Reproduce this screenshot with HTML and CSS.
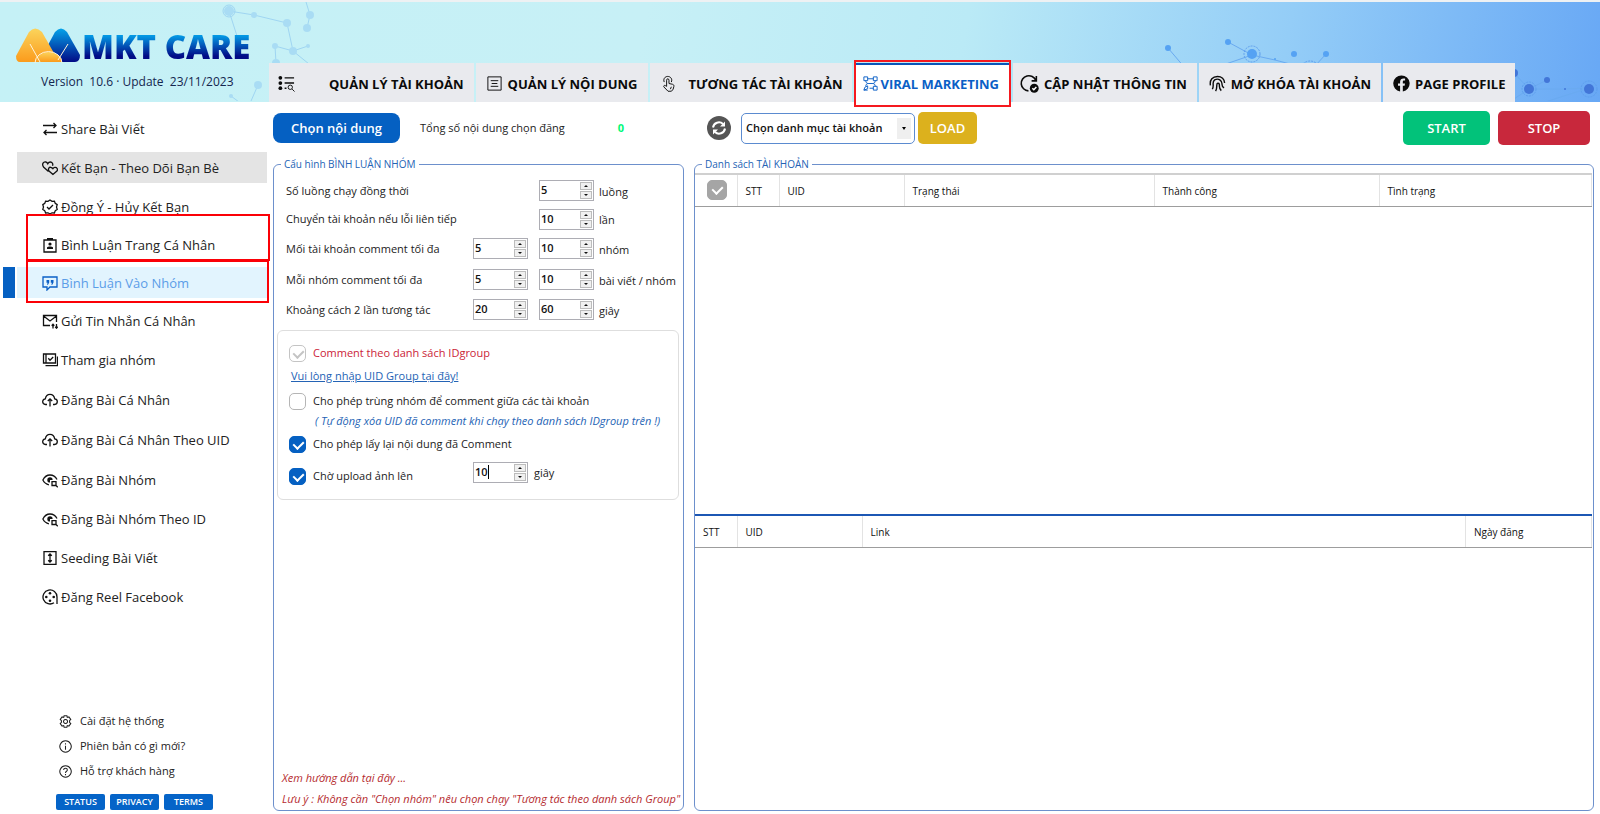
FILE: index.html
```html
<!DOCTYPE html>
<html lang="vi">
<head>
<meta charset="utf-8">
<title>MKT Care</title>
<link rel="stylesheet" href="styles.css">
</head>
<body>
<svg class="sprite" aria-hidden="true">
  <symbol id="i-share" viewBox="0 0 16 16"><path d="M1 4.500h13M11.500 2l2.500 2.500L11.500 7M15 11.500H2M4.500 9L2 11.500L4.500 14"/></symbol>
  <symbol id="i-hearts" viewBox="0 0 16 16"><path d="M6.500 11.500L1.500 7C-.5 4 1.500 1.500 3.800 2c1 .2 1.700 1 2 1.700C6.500 2.500 7.500 2 8.300 2c2 0 3 2 2.200 3.800M11 14.500L7 11C5.700 9 7 7 8.700 7.300c1 .2 1.700.7 2.200 1.400.5-.8 1.200-1.200 2-1.300 2-.2 3.300 2 2 3.700z"/></symbol>
  <symbol id="i-badge" viewBox="0 0 16 16"><path d="M8 1l2 1.300 2.400-.2.800 2.200 2 1.300L14.500 8l.7 2.400-2 1.400-.8 2.200-2.400-.2L8 15l-2-1.200-2.400.2-.8-2.200-2-1.400L1.500 8 .8 5.600l2-1.300.8-2.200 2.400.2zM5 8l2 2 4-4"/></symbol>
  <symbol id="i-id" viewBox="0 0 16 16"><path d="M2 3h12v12H2zM5.500 2.500h5"/><path class="solid" d="M5 1h6v2H5zM5 12v-1.500c1-1.200 5-1.200 6 0V12z"/><circle class="solid" cx="8" cy="7" r="1.600"/></symbol>
  <symbol id="i-quote" viewBox="0 0 16 16"><path d="M1 2h14v10H8l-3 3v-3H1z"/><path class="solid" d="M4.500 5h2.700v2.500L6 9.700H5l.6-2H4.500zM8.800 5h2.700v2.500l-1.200 2.200h-1l.6-2H8.800z"/></symbol>
  <symbol id="i-mail" viewBox="0 0 16 16"><path d="M8 12.500H1.500v-10h13V9M1.500 3L8 8l6.500-5M11 15.500v-4M9.700 12.700L11 11.300l1.300 1.400M14.500 11v4.200M13.200 13.800l1.300 1.400 1.300-1.400"/></symbol>
  <symbol id="i-join" viewBox="0 0 16 16"><path d="M4 2h9.500v9H4zM4 2H1.500v9H4M3.500 13.700H15.500V4.500M6.300 6.300l1.700 1.900 3.200-3.200"/></symbol>
  <symbol id="i-cloud" viewBox="0 0 16 16"><path d="M5 12.500H3.500C1.800 12.300.6 11 .7 9.500.8 8 1.800 7 3.300 6.800 3.800 4 5.800 2.300 8 2.300s4.200 1.700 4.700 4.500c1.600.2 2.600 1.200 2.600 2.700 0 1.700-1.200 2.900-2.800 3H11M8 14.500V7M5.800 9L8 6.800 10.200 9"/></symbol>
  <symbol id="i-eye" viewBox="0 0 16 16"><path d="M15 7.500C13.500 4.600 11 3 8 3S2.500 4.800.9 8c1.300 2.600 3.300 4.200 6 4.800M10 9.700h4v3.800h-4zM14 13.500l1.800 1.800"/><path class="solid" d="M8 5.200A2.700 2.700 0 1 0 8 10.600V8h2.600A2.700 2.700 0 0 0 8 5.200z"/></symbol>
  <symbol id="i-seed" viewBox="0 0 16 16"><path d="M2 1.700h12v12.600H2zM8 4v8M6.200 5.700L8 4l1.800 1.700M6.200 10.300L8 12l1.800-1.700"/></symbol>
  <symbol id="i-reel" viewBox="0 0 16 16"><path d="M15 15V8a7 7 0 1 0-3 5.700"/><circle class="solid" cx="8" cy="4.300" r="1.300"/><circle class="solid" cx="8" cy="11.700" r="1.300"/><circle class="solid" cx="4.300" cy="8" r="1.300"/><circle class="solid" cx="11.700" cy="8" r="1.300"/></symbol>
  <symbol id="i-gear" viewBox="0 0 16 16"><path d="M6.300 1h3.400l.5 2 2-.6 2.300 3L13 7v2l1.500 1.600-2.300 3-2-.6-.5 2H6.300l-.5-2-2 .6-2.300-3L3 9V7L1.500 5.400l2.300-3 2 .6zM8 5.500a2.500 2.500 0 1 0 .1 0z"/></symbol>
  <symbol id="i-info" viewBox="0 0 16 16"><path d="M8 1a7 7 0 1 0 .1 0zM8 7v5M8 4v1.500"/></symbol>
  <symbol id="i-help" viewBox="0 0 16 16"><path d="M8 1a7 7 0 1 0 .1 0zM5.700 6.300c0-3 4.600-2.800 4.600-.2C10.300 7.700 8 7.800 8 9.700M8 11v1.500"/></symbol>
</svg>

<header class="top">
  <svg class="net net-left" viewBox="0 0 110 99" aria-hidden="true">
    <path d="M9 9L34 13 67 21 73 49 55 44M73 49L88 44M9 9L17 34M86 0l4 13-3 13M73 49l16 13M55 44l1 17M38 83l-7 16M11 94l8 6"/>
    <g><circle cx="9" cy="9" r="5"/><circle cx="34" cy="13" r="3"/><circle cx="67" cy="21" r="4"/><circle cx="90" cy="13" r="4"/><circle cx="87" cy="26" r="4"/><circle cx="73" cy="49" r="4"/><circle cx="55" cy="44" r="3"/><circle cx="88" cy="44" r="2"/><circle cx="56" cy="61" r="4"/><circle cx="38" cy="83" r="4"/><circle cx="11" cy="94" r="2"/></g>
    <circle class="ring" cx="9" cy="9" r="6"/>
  </svg>
  <svg class="net net-right" viewBox="0 0 460 99" aria-hidden="true">
    <path d="M28 46l17 20M88 40l24 13 23 5 30 8M112 53L80 64M186 52l-11 12M374 71l15 16M389 87l18-9M389 87h36l24-1 11-8M389 87l-18 12M449 86l-44 14M449 86l11 8"/>
    <g><circle cx="28" cy="46" r="3"/><circle cx="88" cy="40" r="3"/><circle cx="112" cy="52" r="5"/><circle cx="154" cy="52" r="3"/><circle cx="186" cy="52" r="3"/><circle cx="135" cy="57" r="1"/></g>
    <g class="deep"><circle cx="374" cy="71" r="4"/><circle cx="389" cy="87" r="5"/><circle cx="407" cy="78" r="3"/><circle cx="425" cy="87" r="1"/><circle cx="449" cy="87" r="5"/></g>
    <g class="ring"><circle cx="112" cy="52" r="8"/><circle cx="170" cy="69" r="10"/><circle cx="389" cy="87" r="7"/><circle cx="449" cy="87" r="8"/></g>
  </svg>

  <div class="brand">
    <div class="brand-row">
      <svg class="brand-mark" viewBox="0 0 64 35" aria-hidden="true">
        <defs>
          <linearGradient id="gold" x2="0" y2="1"><stop stop-color="#fbd45c"/><stop offset="1" stop-color="#fb9b1c"/></linearGradient>
          <linearGradient id="navy" x2="0" y2="1"><stop stop-color="#04a4ea"/><stop offset="1" stop-color="#020b86"/></linearGradient>
        </defs>
        <path fill="url(#navy)" d="M32 17L39 4Q45-3 51 4L64 27Q64 34 59 34H44z"/>
        <path fill="url(#gold)" d="M0 28L13 4Q19-3 26 4L43 34H4Q0 34 0 28z"/>
        <path fill="url(#gold)" d="M20 34a13 10 0 0 1 26 0z"/>
        <path class="cut" d="M14 16L24 34M52 16L42 32M19 35a13 11 0 0 1 27 0"/>
      </svg>
      <span class="brand-name">MKT CARE</span>
    </div>
    <p class="version">Version&nbsp; 10.6 · Update&nbsp; 23/11/2023</p>
  </div>

  <nav class="tabs">
    <a class="tab tab-wide" href="#"><svg viewBox="0 0 18 18"><path class="mid" d="M7 3h10M7 8.500h10M7 14h2"/><circle class="solid" cx="2.500" cy="3" r="2"/><circle class="solid" cx="2.500" cy="8.500" r="2"/><circle class="solid" cx="2.500" cy="14" r="2"/><circle cx="13" cy="13" r="2.300"/><path d="M15 15l2.500 2.500"/></svg><span>QUẢN LÝ TÀI KHOẢN</span></a>
    <a class="tab" href="#"><svg viewBox="0 0 18 18"><path d="M2 2h14v14H2zM5 6h8M6 9h6M5 12h8"/></svg><span>QUẢN LÝ NỘI DUNG</span></a>
    <a class="tab tab-touch" href="#"><svg viewBox="0 0 18 18"><path d="M7 12V5.500c0-2 2.500-2 2.500 0V9l3.700.8c1.200.3 1.800 1.200 1.500 2.300l-.9 3.400-2 1.700H8.500L4 12.500c-.5-1.200.9-2 1.800-1.200zM4.500 7.500C3 4 5.500 1.500 8.200 1.500S13.500 4 12 7.500M11 15l1-2.500"/></svg><span>TƯƠNG TÁC TÀI KHOẢN</span></a>
    <a class="tab tab-active" href="#"><svg viewBox="0 0 18 18"><path d="M2 2h4v4H2zM12 2h4v4h-4zM12 12h4v4h-4zM6 4h6M4 6c0 2 1 3 3 3h4c2 0 3-1 3-3M4 12c0-2 1-3 3-3M14 12c0-2-1-3-3-3M8 14h4M2 16l1-3 3-1.500v3zM2 16h4"/></svg><span>VIRAL MARKETING</span></a>
    <a class="tab tab-update" href="#"><svg viewBox="0 0 18 18"><path class="mid" d="M8 16A7.200 7.200 0 1 1 15 6M15.500 2v4.500H11"/><circle class="solid" cx="13.500" cy="13.500" r="4.200"/><path class="tick" d="M11.700 13.500l1.400 1.400 2.400-2.600"/></svg><span>CẬP NHẬT THÔNG TIN</span></a>
    <a class="tab" href="#"><svg viewBox="0 0 18 18"><path class="mid" d="M1.500 11C.5 5 4 1.500 9 1.500c4.500 0 7.300 3 7.500 7M3.500 15C6 11 2.500 7.500 6 5.200c4-2.200 8 .5 7.800 4.800 0 2 .7 3 2.200 3.500M7 17c2.500-4 0-8 2.300-8.300 2-.2 1.700 2 1.700 3.300 0 1.800.8 3.500 2 4.500"/></svg><span>MỞ KHÓA TÀI KHOẢN</span></a>
    <a class="tab" href="#"><svg viewBox="0 0 18 18"><path class="solid" d="M9 .5a8.500 8.500 0 0 0-1.500 16.900v-5.900H5.300V9h2.200V7.200C7.500 4.800 9 3.600 11 3.600l1.800.2v2.100h-1c-1 0-1.400.6-1.400 1.300V9h2.300l-.4 2.500h-1.900v5.900A8.500 8.500 0 0 0 9 .5z"/></svg><span>PAGE PROFILE</span></a>
  </nav>
</header>

<div class="shell">
  <aside class="side">
    <nav class="menu">
      <ul class="group">
        <li><a href="#"><svg><use href="#i-share"/></svg>Share Bài Viết</a></li>
        <li class="hover"><a href="#"><svg><use href="#i-hearts"/></svg>Kết Bạn - Theo Dõi Bạn Bè</a></li>
        <li><a href="#"><svg><use href="#i-badge"/></svg>Đồng Ý - Hủy Kết Bạn</a></li>
      </ul>
      <ul class="group group-tight">
        <li class="framed"><a href="#"><svg><use href="#i-id"/></svg>Bình Luận Trang Cá Nhân</a></li>
        <li class="current"><a href="#"><svg><use href="#i-quote"/></svg>Bình Luận Vào Nhóm</a></li>
        <li><a href="#"><svg><use href="#i-mail"/></svg>Gửi Tin Nhắn Cá Nhân</a></li>
      </ul>
      <ul class="group group-loose">
        <li><a href="#"><svg><use href="#i-join"/></svg>Tham gia nhóm</a></li>
        <li><a href="#"><svg><use href="#i-cloud"/></svg>Đăng Bài Cá Nhân</a></li>
        <li><a href="#"><svg><use href="#i-cloud"/></svg>Đăng Bài Cá Nhân Theo UID</a></li>
        <li><a href="#"><svg><use href="#i-eye"/></svg>Đăng Bài Nhóm</a></li>
      </ul>
      <ul class="group">
        <li><a href="#"><svg><use href="#i-eye"/></svg>Đăng Bài Nhóm Theo ID</a></li>
        <li><a href="#"><svg><use href="#i-seed"/></svg>Seeding Bài Viết</a></li>
        <li><a href="#"><svg><use href="#i-reel"/></svg>Đăng Reel Facebook</a></li>
      </ul>
    </nav>
    <footer class="side-foot">
      <a class="help" href="#"><svg><use href="#i-gear"/></svg>Cài đặt hệ thống</a>
      <a class="help" href="#"><svg><use href="#i-info"/></svg>Phiên bản có gì mới?</a>
      <a class="help" href="#"><svg><use href="#i-help"/></svg>Hỗ trợ khách hàng</a>
      <div class="pills"><button>STATUS</button><button>PRIVACY</button><button>TERMS</button></div>
    </footer>
  </aside>

  <main class="main">
    <section class="config">
      <div class="bar">
        <button class="btn btn-pick">Chọn nội dung</button>
        <span class="total">Tổng số nội dung chọn đăng</span>
        <output class="count">0</output>
      </div>
      <fieldset class="panel">
        <legend>Cấu hình BÌNH LUẬN NHÓM</legend>
        <div class="rows">
          <label for="threads">Số luồng chạy đồng thời</label><span class="spin last"><input id="threads" type="number" value="5"><span class="arrows"><button aria-label="Tăng"></button><button aria-label="Giảm"></button></span></span><span class="unit">luồng</span>
          <label for="errs">Chuyển tài khoản nếu lỗi liên tiếp</label><span class="spin last"><input id="errs" type="number" value="10"><span class="arrows"><button aria-label="Tăng"></button><button aria-label="Giảm"></button></span></span><span class="unit">lần</span>
          <label for="acc-min">Mối tài khoản comment tối đa</label><span class="spin"><input id="acc-min" type="number" value="5"><span class="arrows"><button aria-label="Tăng"></button><button aria-label="Giảm"></button></span></span><span class="spin last"><input aria-label="Nhóm tối đa" type="number" value="10"><span class="arrows"><button aria-label="Tăng"></button><button aria-label="Giảm"></button></span></span><span class="unit">nhóm</span>
          <label for="grp-min">Mỗi nhóm comment tối đa</label><span class="spin"><input id="grp-min" type="number" value="5"><span class="arrows"><button aria-label="Tăng"></button><button aria-label="Giảm"></button></span></span><span class="spin last"><input aria-label="Bài viết tối đa" type="number" value="10"><span class="arrows"><button aria-label="Tăng"></button><button aria-label="Giảm"></button></span></span><span class="unit">bài viết / nhóm</span>
          <label for="gap-min">Khoảng cách 2 lần tương tác</label><span class="spin"><input id="gap-min" type="number" value="20"><span class="arrows"><button aria-label="Tăng"></button><button aria-label="Giảm"></button></span></span><span class="spin last"><input aria-label="Khoảng cách tối đa" type="number" value="60"><span class="arrows"><button aria-label="Tăng"></button><button aria-label="Giảm"></button></span></span><span class="unit">giây</span>
        </div>
        <div class="options">
          <label class="opt opt-locked"><input class="check" type="checkbox" checked disabled>Comment theo danh sách IDgroup</label>
          <a class="uid-link" href="#">Vui lòng nhập UID Group tại đây!</a>
          <label class="opt"><input class="check" type="checkbox">Cho phép trùng nhóm để comment giữa các tài khoản</label>
          <p class="note">( Tự động xóa UID đã comment khi chạy theo danh sách IDgroup trên !)</p>
          <label class="opt"><input class="check" type="checkbox" checked>Cho phép lấy lại nội dung đã Comment</label>
          <div class="wait">
            <label class="opt"><input class="check" type="checkbox" checked>Chờ upload ảnh lên</label>
            <span class="spin caret"><input aria-label="Thời gian chờ" type="number" value="10"><span class="arrows"><button aria-label="Tăng"></button><button aria-label="Giảm"></button></span></span><span class="unit">giây</span>
          </div>
        </div>
        <div class="hints"><p>Xem hướng dẫn tại đây ...</p><p>Lưu ý : Không cần "Chọn nhóm" nêu chọn chạy "Tương tác theo danh sách Group"</p></div>
      </fieldset>
    </section>

    <section class="accounts">
      <div class="bar">
        <button class="refresh" aria-label="Làm mới"><svg viewBox="0 0 24 24"><circle cx="12" cy="12" r="12"/><path d="M6 11.500A6 6 0 0 1 16 8M18 12.500A6 6 0 0 1 8 16"/><path class="solid" d="M18 5.500v5h-5zM6 18.500v-5h5z"/></svg></button>
        <span class="picker"><select aria-label="Danh mục tài khoản"><option>Chọn danh mục tài khoản</option></select></span>
        <button class="btn btn-load">LOAD</button>
        <button class="btn btn-start">START</button>
        <button class="btn btn-stop">STOP</button>
      </div>
      <fieldset class="panel">
        <legend>Danh sách TÀI KHOẢN</legend>
        <div class="pane">
          <table>
            <colgroup><col class="c-sm"><col class="c-sm"><col class="c-md"><col class="c-state"><col class="c-done"><col></colgroup>
            <thead><tr><th class="pick"><input class="check check-all" type="checkbox" checked aria-label="Chọn tất cả"></th><th>STT</th><th>UID</th><th>Trạng thái</th><th>Thành công</th><th>Tình trạng</th></tr></thead>
          </table>
        </div>
        <div class="pane pane-log">
          <table>
            <colgroup><col class="c-sm"><col class="c-md"><col><col class="c-date"></colgroup>
            <thead><tr><th>STT</th><th>UID</th><th>Link</th><th>Ngày đăng</th></tr></thead>
          </table>
        </div>
      </fieldset>
    </section>
  </main>
</div>
</body>
</html>
```

FILE: styles.css
```css
* { box-sizing: border-box; }
body {
  margin: 0;
  min-height: 100vh;
  display: flex;
  flex-direction: column;
  background: #fff;
  color: #222;
  font: 11px/16px "Open Sans", "Noto Sans", sans-serif;
}
ul, p { margin: 0; padding: 0; list-style: none; }
a { color: inherit; text-decoration: none; }
button, input, select { font: inherit; color: inherit; }
button { border: 0; padding: 0; cursor: pointer; }
svg { fill: none; stroke: currentColor; flex: none; }
.sprite { position: absolute; width: 0; height: 0; }
.solid { fill: currentColor; stroke: none; }

/* header */
.top {
  position: relative;
  display: flex;
  height: 102px;
  border-top: 2px solid #eef1f3;
  background:
    linear-gradient(100deg, #c5f1f6 0%, #c7f0f6 40%, #baeaf6 60%, #94cdf7 80%, #68a8f5 100%);
}
.net { position: absolute; top: 0; height: 99px; stroke: #9fd5f2; stroke-width: 1; }
.net g { fill: #a9dcf4; stroke: none; }
.net .ring { fill: none; stroke: #9fd5f2; }
.net-left { left: 220px; width: 110px; }
.net-right { right: 0; width: 460px; stroke: #6aaaf0; }
.net-right g { fill: #55a2f3; }
.net-right .deep { fill: #4276d8; }
.net-right .ring { fill: none; stroke: #5f9fee; stroke-dasharray: 2 1; }

.brand { position: relative; width: 269px; flex: none; padding: 26px 0 0 16px; }
.brand-row { display: flex; align-items: flex-end; gap: 2px; height: 35px; }
.brand-mark { width: 64px; height: 35px; stroke: none; }
.brand-mark .cut { stroke: #fff3d8; stroke-width: 1; }
.brand-name {
  font: 800 33px/36px "Open Sans", sans-serif;
  white-space: nowrap;
  height: 34px;
  background: linear-gradient(#0398e4 20%, #020b86 80%);
  background-clip: text;
  color: transparent;
}
.version { margin: 10px 0 0 25px; font-size: 12px; line-height: 18px; color: #14264f; white-space: pre; }

.tabs { position: relative; display: flex; align-items: flex-end; gap: 2px; }
.tab {
  display: flex;
  align-items: center;
  gap: 5px;
  height: 39px;
  padding: 2px 10px 0;
  background: #e9eaee;
  color: #0b0b0b;
  font-size: 13px;
  font-weight: 700;
  white-space: nowrap;
}
.tab svg { width: 17px; height: 17px; stroke-width: 1; }
.tab .mid { stroke-width: 1.5; }
.tick { stroke: #fff; stroke-width: 1.5; }
.tab-wide { gap: 34px; padding-left: 9px; }
.tab-touch { gap: 12px; }
.tab-active {
  position: relative;
  gap: 1px;
  padding: 0 10px 0 6px;
  margin: 0 2px;
  background: #fff;
  border-top: 2px solid #0a55b8;
  color: #0a5fc6;
}
.tab-active::after { content: ""; position: absolute; inset: -5px -2px -5px; border: 2px solid #f5191f; }
.tab-update { padding-left: 7px; }
.tab-update svg { width: 19px; height: 19px; }

/* side menu */
.shell { flex: 1; display: flex; }
.side { width: 269px; flex: none; display: flex; flex-direction: column; justify-content: space-between; padding: 11px 2px 4px 17px; }
.menu { display: flex; flex-direction: column; gap: 7px; }
.group { display: flex; flex-direction: column; gap: 8px; }
.group-tight { gap: 7px; }
.group-loose { gap: 9px; margin: 1px 0; }
.group li { position: relative; height: 31px; }
.group a { display: flex; align-items: center; gap: 3px; height: 31px; padding-left: 25px; font-size: 13px; white-space: nowrap; }
.group svg { width: 16px; height: 16px; color: #111; stroke-width: 1.3; }
.hover { background: #e4e4e4; }
.current { background: #e2f4fe; color: #5b9de8; }
.group .current svg { color: #0a5fc6; }
.current::before { content: ""; position: absolute; left: -14px; top: 0; width: 12px; height: 31px; background: #0560c2; }
.framed::after, .current::after { content: ""; position: absolute; border: 2px solid #fb0007; }
.framed::after { inset: -15px -3px -1px 9px; }
.current::after { inset: -7px -2px -5px 9px; }

.side-foot { display: flex; flex-direction: column; gap: 9px; padding-left: 39px; }
.help { display: flex; align-items: center; gap: 8px; padding-left: 3px; }
.help svg { width: 13px; height: 13px; stroke-width: 1.3; }
.pills { display: flex; gap: 5px; margin-top: 6px; }
.pills button { width: 49px; height: 16px; border-radius: 2px; background: #0564c8; color: #fff; font-size: 9px; line-height: 16px; font-weight: 600; }

/* work area */
.main { flex: 1; min-width: 0; display: flex; gap: 10px; padding: 5px 6px 3px 4px; }
.config { width: 411px; flex: none; display: flex; flex-direction: column; }
.accounts { flex: 1; min-width: 0; display: flex; flex-direction: column; }
.bar { display: flex; align-items: center; height: 42px; }
.btn { border-radius: 5px; color: #fff; font-weight: 600; font-size: 13px; }
.btn-pick { width: 127px; height: 30px; border-radius: 8px; background: #0560c2; }
.total { margin-left: 20px; }
.count { margin-left: 53px; color: #00f978; font-weight: 700; }
.refresh { margin-left: 13px; width: 24px; height: 24px; background: none; }
.refresh svg { width: 24px; height: 24px; display: block; color: #fff; stroke-width: 2; }
.refresh circle { fill: #555; stroke: none; }
.picker { position: relative; margin: 0 3px 0 10px; }
.picker select {
  appearance: none;
  display: block;
  width: 174px;
  height: 31px;
  padding: 0 20px 0 4px;
  border: 1px solid #5b8bd0;
  border-radius: 5px;
  background: #fff;
  color: #111;
  font-weight: 600;
}
.picker::before {
  content: "";
  position: absolute;
  right: 4px;
  top: 5px;
  width: 14px;
  height: 21px;
  background: #efefef;
  pointer-events: none;
}
.picker::after {
  content: "";
  position: absolute;
  right: 9px;
  top: 14px;
  border: 2px solid transparent;
  border-top: 3px solid #000;
  border-bottom: 0;
  pointer-events: none;
}
.btn-load { width: 59px; height: 32px; background: #dcb11d; }
.btn-start { width: 87px; height: 34px; margin-left: auto; background: #02c27a; }
.btn-stop { width: 92px; height: 34px; margin: 0 4px 0 8px; background: #c8283c; }

.panel { flex: 1; display: flex; flex-direction: column; margin: 7px 0 0; padding: 0; min-width: 0; border: 1px solid #6d90cc; border-radius: 6px; }
.panel legend { margin-left: 7px; padding: 0 3px; color: #2463b5; line-height: 16px; font-size: 10px; }
.rows {
  display: grid;
  grid-template-columns: 187px 55px 11px 55px 1fr;
  grid-template-rows: 21px 18px 23px 21px 21px;
  row-gap: 9px;
  align-items: center;
  padding: 8px 0 0 12px;
}
.rows label { grid-column: 1; white-space: nowrap; }
.rows .spin { grid-column: 2; }
.rows .last { grid-column: 4; }
.rows .unit { grid-column: 5; padding: 2px 0 0 5px; white-space: nowrap; }
.spin { position: relative; display: flex; align-items: flex-start; width: 55px; height: 21px; padding: 1px; border: 1px solid #adadb4; background: #fff; color: #111; font-weight: 600; }
.spin input { flex: 1; min-width: 0; height: 16px; border: 0; padding: 0; background: none; outline: 0; appearance: textfield; line-height: 16px; }
.spin input::-webkit-inner-spin-button { appearance: none; }
.arrows { width: 12px; height: 17px; display: grid; grid-template-rows: 1fr 1fr; gap: 1px; }
.arrows button { display: grid; place-items: center; background: #f0f0f0; border: 1px solid #bcbcbc; }
.arrows button::before { content: ""; border: 2px solid transparent; border-top: 0; border-bottom-color: #111; }
.arrows button + button::before { border: 2px solid transparent; border-bottom: 0; border-top-color: #111; }
.caret::after { content: ""; position: absolute; left: 14px; top: 2px; width: 1px; height: 14px; background: #000; }

.options { display: flex; flex-direction: column; margin: 10px 4px 0 3px; padding: 13px 0 14px 11px; border: 1px solid #dedede; border-radius: 6px; }
.opt { display: flex; align-items: center; gap: 7px; height: 18px; white-space: nowrap; }
.opt-locked { color: #cb2438; }
.uid-link { align-self: flex-start; margin: 6px 0 8px 2px; color: #2463b5; text-decoration: underline; white-space: nowrap; }
.note { margin: 3px 0 6px 26px; font-style: italic; color: #2463b5; white-space: nowrap; }
.wait { display: grid; grid-template-columns: 184px 55px 1fr; align-items: start; margin-top: 9px; }
.wait .opt { margin-top: 5px; }
.wait .unit { padding: 3px 0 0 6px; }
.check {
  appearance: none;
  position: relative;
  width: 17px;
  height: 17px;
  margin: 0;
  border: 1px solid #b5b5b5;
  border-radius: 5px;
  background: #fff;
}
.check:checked { background: #0560c2; border-color: #0560c2; }
.check:disabled { background: #fff; border-color: #c4c4c4; }
.check:checked::after { content: ""; position: absolute; left: 5px; top: 2px; width: 5px; height: 8px; border: solid #fff; border-width: 0 2px 2px 0; transform: rotate(45deg); }
.check:disabled::after { border-color: #c4c4c4; }
.hints { margin-top: auto; padding: 0 0 1px 8px; font-style: italic; color: #b52a2e; white-space: nowrap; line-height: 21px; }

/* tables */
.pane { height: 341px; flex: none; margin: 1px 1px 0 0; border-top: 2px solid #d0d0d0; }
.pane-log { flex: 1; margin-top: 0; border-top: 2px solid #1c57b4; }
table { width: 100%; table-layout: fixed; border-collapse: collapse; }
th { height: 31px; padding: 1px 8px 0; border-right: 1px solid #e3e3e3; border-bottom: 1px solid #9d9d9d; text-align: left; font-weight: 400; font-size: 10px; line-height: 14px; color: #111; }
.c-sm { width: 42px; }
.c-md { width: 125px; }
.c-state { width: 250px; }
.c-done { width: 225px; }
.c-date { width: 126px; }
.pick { padding: 0 0 0 3px; text-align: center; line-height: 0; }
.check-all { width: 20px; height: 20px; }
.check-all:checked { background: #a5a5a5; border-color: #a5a5a5; }
.check-all:checked::after { left: 6px; top: 3px; }
```
